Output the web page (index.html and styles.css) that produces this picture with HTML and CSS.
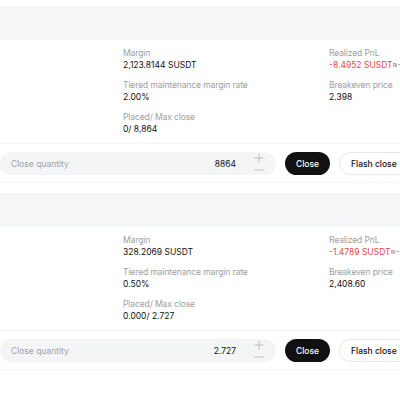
FILE: index.html
```html
<!DOCTYPE html>
<html>
<head>
<meta charset="utf-8">
<link rel="stylesheet" href="styles.css">
</head>
<body>
<div class="list">
  <section class="card">
    <div class="card-head"></div>
    <div class="info">
      <div class="col">
        <div class="field"><div class="label">Margin</div><div class="value">2,123.8144 SUSDT</div></div>
        <div class="field"><div class="label dotted">Tiered maintenance margin rate</div><div class="value">2.00%</div></div>
        <div class="field"><div class="label dotted">Placed/ Max close</div><div class="value">0/ 8,864</div></div>
      </div>
      <div class="col">
        <div class="field"><div class="label dotted">Realized PnL</div><div class="value"><span class="neg">-8.4952 SUSDT</span><span class="approx">≈-8</span></div></div>
        <div class="field"><div class="label dotted">Breakeven price</div><div class="value">2.398</div></div>
      </div>
    </div>
    <div class="actions">
      <div class="qty">
        <span class="qty-label">Close quantity</span>
        <span class="qty-value">8864</span>
        <span class="stepper">
          <svg class="step" width="10" height="10" viewBox="0 0 10 10"><path d="M5 0.5V9.5M0.5 5H9.5" stroke="#b8b8b8" stroke-width="0.9" fill="none"/></svg>
          <svg class="step" width="10" height="10" viewBox="0 0 10 10"><path d="M0.5 5H9.5" stroke="#b8b8b8" stroke-width="0.9" fill="none"/></svg>
        </span>
      </div>
      <button class="btn btn-dark">Close</button>
      <button class="btn btn-light">Flash close</button>
    </div>
  </section>
  <section class="card">
    <div class="card-head"></div>
    <div class="info">
      <div class="col">
        <div class="field"><div class="label">Margin</div><div class="value">328.2069 SUSDT</div></div>
        <div class="field"><div class="label dotted">Tiered maintenance margin rate</div><div class="value">0.50%</div></div>
        <div class="field"><div class="label dotted">Placed/ Max close</div><div class="value">0.000/ 2.727</div></div>
      </div>
      <div class="col">
        <div class="field"><div class="label dotted">Realized PnL</div><div class="value"><span class="neg">-1.4789 SUSDT</span><span class="approx">≈-1</span></div></div>
        <div class="field"><div class="label dotted">Breakeven price</div><div class="value">2,408.60</div></div>
      </div>
    </div>
    <div class="actions">
      <div class="qty">
        <span class="qty-label">Close quantity</span>
        <span class="qty-value">2.727</span>
        <span class="stepper">
          <svg class="step" width="10" height="10" viewBox="0 0 10 10"><path d="M5 0.5V9.5M0.5 5H9.5" stroke="#b8b8b8" stroke-width="0.9" fill="none"/></svg>
          <svg class="step" width="10" height="10" viewBox="0 0 10 10"><path d="M0.5 5H9.5" stroke="#b8b8b8" stroke-width="0.9" fill="none"/></svg>
        </span>
      </div>
      <button class="btn btn-dark">Close</button>
      <button class="btn btn-light">Flash close</button>
    </div>
  </section>
</div>
</body>
</html>
```
FILE: styles.css
```css
html, body {
  margin: 0;
  padding: 0;
  background: #fff;
  overflow: hidden;
}
body {
  font-family: Inter, "Liberation Sans", sans-serif;
  font-size: 8.5px;
  color: #121212;
  width: 400px;
}
.list {
  padding-top: 6px;
  display: flex;
  flex-direction: column;
  gap: 10px;
}
.card-head {
  height: 34px;
  background: #f5f6f7;
}
.info {
  display: grid;
  grid-template-columns: 206px 71px;
  padding: 7px 0 8px 123px;
}
.col {
  display: flex;
  flex-direction: column;
  gap: 8px;
  min-width: 0;
}
.field {
  white-space: nowrap;
  overflow: hidden;
}
.label, .value {
  line-height: 12px;
}
.label {
  color: #9e9e9e;
  letter-spacing: -0.1px;
}
.value {
  color: #111;
}
.neg {
  color: #e5484d;
}
.approx {
  color: #8a8a8a;
}
.actions {
  display: flex;
  align-items: center;
  padding: 8px 0 7px;
  border-top: 1px solid #f3f3f3;
  border-bottom: 1px solid #f3f3f3;
}
.qty {
  width: 276px;
  height: 23px;
  box-sizing: border-box;
  background: #f4f5f6;
  border-radius: 12px;
  display: flex;
  align-items: center;
  padding-left: 11px;
  flex-shrink: 0;
}
.qty-label {
  color: #a3a3a3;
  flex: 1;
}
.qty-value {
  color: #111;
  margin-right: 18px;
}
.stepper {
  width: 10px;
  margin-right: 12px;
  height: 23px;
  display: flex;
  flex-direction: column;
  align-items: center;
  justify-content: center;
  gap: 2px;
}
.step {
  display: block;
}
.btn {
  font-family: inherit;
  font-size: 8.5px;
  height: 23px;
  border-radius: 12px;
  flex-shrink: 0;
  cursor: pointer;
  font-weight: 500;
}
.btn-dark {
  margin-left: 9px;
  width: 45px;
  padding: 0;
  background: #111;
  color: #fff;
  border: none;
}
.btn-light {
  margin-left: 9px;
  padding: 0 11px;
  background: #fff;
  color: #141414;
  border: 1px solid #e6e6e6;
}
```
